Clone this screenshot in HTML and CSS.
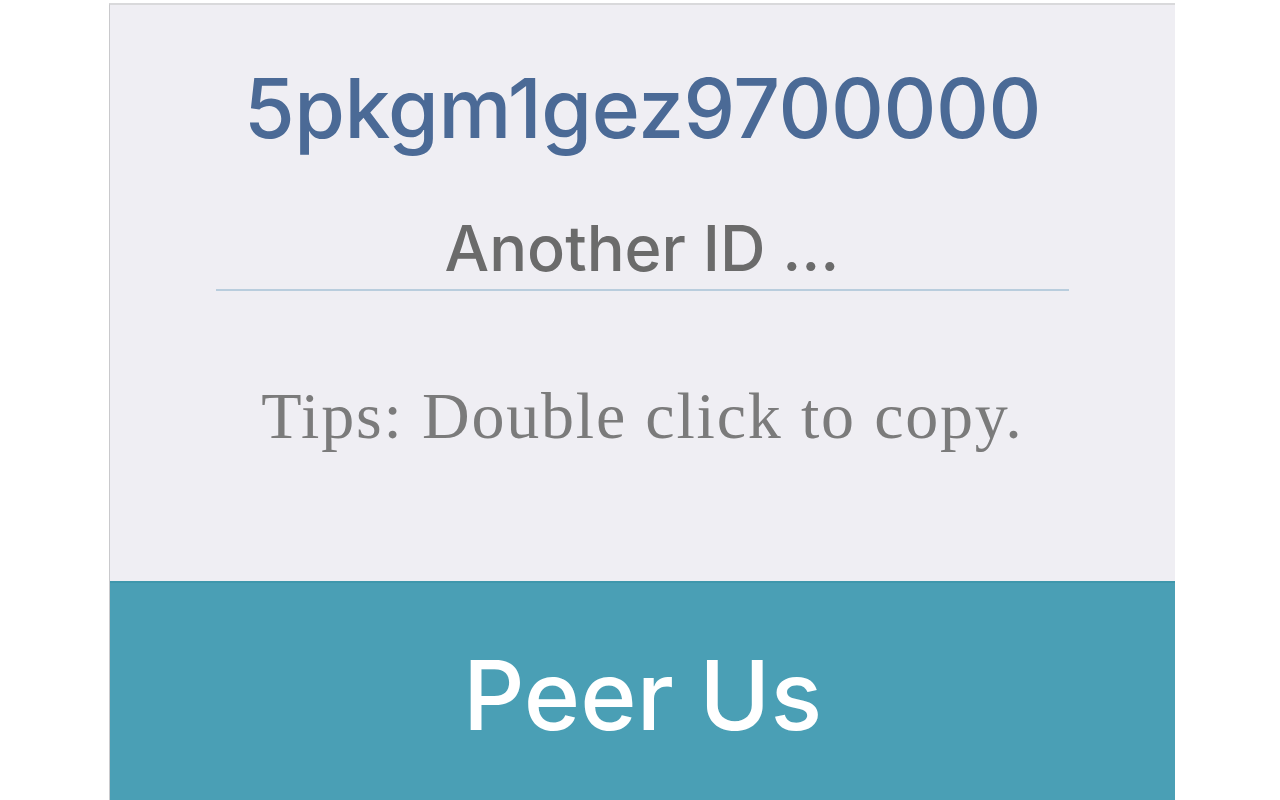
FILE: index.html
```html
<!DOCTYPE html>
<html>
<head>
<meta charset="utf-8">
<link rel="stylesheet" href="styles.css">
</head>
<body>
<div class="panel">
  <div class="content">
    <div class="peer-id">5pkgm1gez9700000</div>
    <div class="field">
      <input class="another" type="text" placeholder="Another ID ...">
    </div>
    <div class="tips">Tips: Double click to copy.</div>
  </div>
  <button class="peer-btn">Peer Us</button>
</div>
</body>
</html>
```

FILE: styles.css
```css
html, body {
  margin: 0;
  padding: 0;
  background: #ffffff;
  height: 800px;
  overflow: hidden;
}
.panel {
  margin: 3px 0 0 109px;
  width: 1066px;
  height: 797px;
  box-sizing: border-box;
  background: #efeef3;
  border-top: 2px solid #d9d9db;
  border-left: 1px solid #c9c9cc;
  display: flex;
  flex-direction: column;
}
.content {
  height: 576px;
  flex: none;
  display: flex;
  flex-direction: column;
  align-items: center;
}
.peer-id {
  margin-top: 54px;
  font-family: Inter, "Liberation Sans", sans-serif;
  font-weight: 500;
  font-size: 82px;
  letter-spacing: -0.4px;
  line-height: 100px;
  height: 100px;
  color: #4b6a96;
  white-space: nowrap;
}
.field {
  margin-top: 47px;
  width: 853px;
  margin-left: -1px;
}
.another {
  display: block;
  width: 100%;
  box-sizing: border-box;
  border: none;
  border-bottom: 2px solid #b9cddd;
  background: transparent;
  font-family: Inter, "Liberation Sans", sans-serif;
  font-weight: 500;
  font-size: 63px;
  height: 85px;
  padding: 0;
  margin: 0;
  text-align: center;
  color: #666;
  outline: none;
}
.another::placeholder {
  color: #6b6b6b;
}
.tips {
  margin-top: 85px;
  font-family: "Liberation Serif", serif;
  font-size: 66px;
  line-height: 80px;
  letter-spacing: 1.8px;
  color: #7b7b7b;
  white-space: nowrap;
}
.peer-btn {
  flex: 1;
  display: flex;
  justify-content: center;
  align-items: flex-start;
  border: none;
  border-top: 2px solid #3f97ac;
  background: #4a9fb5;
  color: #ffffff;
  font-family: Inter, "Liberation Sans", sans-serif;
  font-weight: 500;
  font-size: 96px;
  line-height: 96px;
  padding: 64px 0 0 0;
  margin: 0;
  cursor: pointer;
}
```
